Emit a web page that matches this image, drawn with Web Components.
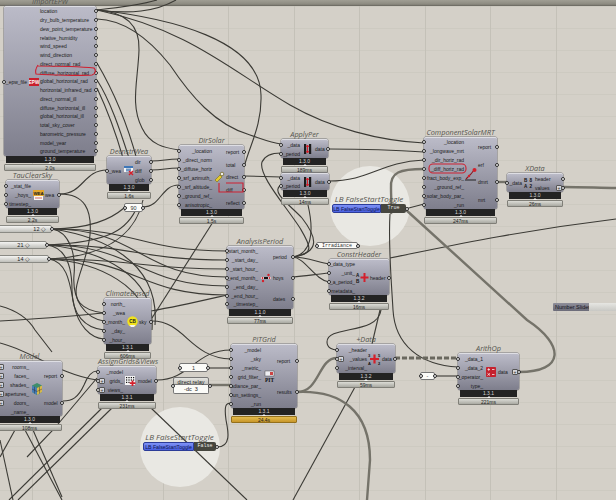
<!DOCTYPE html>
<html>
<head>
<meta charset="utf-8">
<style>
html, body { margin: 0; padding: 0; background: #d4d0c8; }
</style>
</head>
<body>
<gh-canvas>
  <gh-halo cx="370" cy="206" r="40"></gh-halo>
  <gh-halo cx="180" cy="447" r="40"></gh-halo>
  <gh-wires></gh-wires>

  <gh-node x="4" y="6" w="92" h="150" l="23" ic="13" name="ImportEPW" in="_epw_file" version="1.3.0" time="2.0s"
    out="location|dry_bulb_temperature|dew_point_temperature|relative_humidity|wind_speed|wind_direction|direct_normal_rad|diffuse_horizontal_rad|global_horizontal_rad|horizontal_infrared_rad|direct_normal_ill|diffuse_horizontal_ill|global_horizontal_ill|total_sky_cover|barometric_pressure|model_year|ground_temperature">
    <gh-icon kind="epw"></gh-icon>
  </gh-node>
  <gh-node x="107" y="156" w="44" h="28" l="14" name="DecnstrWea" in="_wea" out="dir|diff|glob" version="1.3.0" time="1.6s"><gh-icon kind="dec"></gh-icon></gh-node>
  <gh-node x="6" y="180" w="53" h="28" l="25" name="TauClearSky" in="_stat_file|_hoys_|timestep_" out="wea" version="1.3.0" time="2.2s"><gh-icon kind="wea"></gh-icon></gh-node>
  <gh-node x="179" y="145" w="65" h="64" l="33" name="DirSolar" in="_location|_direct_norm|_diffuse_horiz|_srf_azimuth_|_srf_altitude_|_ground_ref_|anisotropic_" out="report|total|direct|diff|reflect" version="1.3.0" time="1.5s"><gh-icon kind="sol"></gh-icon></gh-node>
  <gh-node x="281" y="139" w="47" h="19" l="19" ic="15" name="ApplyPer" in="_data|_period" out="data" version="1.3.0" time="189ms"><gh-icon kind="per"></gh-icon></gh-node>
  <gh-node x="281" y="173" w="48" h="17" l="19" ic="15" in="_data|_period" out="data" version="1.3.0" time="14ms"><gh-icon kind="per"></gh-icon></gh-node>
  <gh-node x="424" y="137" w="73" h="72" l="40" name="ComponentSolarMRT" in="_location|_longwave_mrt|_dir_horiz_rad|_diff_horiz_rad|fract_body_exp_|_ground_ref_|_solar_body_par_|_run" out="report|erf|dmrt|mrt" version="1.3.0" time="247ms"><gh-icon kind="mrt"></gh-icon></gh-node>
  <gh-node x="507" y="173" w="56" h="19" l="15" ic="13" name="XData" in="_data" out="header|values#" version="1.3.0" time="26ms"><gh-icon kind="xd"></gh-icon></gh-node>
  <gh-node x="227" y="246" w="66" h="63" l="31" ic="15" name="AnalysisPeriod" in="_start_month_|_start_day_|_start_hour_|_end_month_|_end_day_|_end_hour_|_timestep_" out="period|hoys|dates" version="1.1.0" time="77ms"><gh-icon kind="ap"></gh-icon></gh-node>
  <gh-node x="329" y="259" w="60" h="36" l="26" ic="15" name="ConstrHeader" in="_data_type|_unit_|_a_period_|metadata_" out="header" version="1.3.2" time="16ms"><gh-icon kind="ch"></gh-icon></gh-node>
  <gh-node x="104" y="298" w="47" h="46" l="21" name="ClimateBased" in="north_|_wea|_month_|_day_|_hour_" out="sky" version="1.3.1" time="606ms"><gh-icon kind="cb"></gh-icon></gh-node>
  <gh-node x="-3" y="361" w="65" h="55" l="32" ic="15" name="Model" in="rooms_#|faces_#|shades_#|apertures_#|doors_#|_name_" out="report|model" version="1.3.0" time="108ms"><gh-icon kind="mod"></gh-icon></gh-node>
  <gh-node x="98" y="366" w="58" h="28" l="25" ic="15" name="AssignGrids&amp;Views" in="_model|grids_#|views_#" out="model" version="1.3.1" time="231ms"><gh-icon kind="grid"></gh-icon></gh-node>
  <gh-node x="231" y="344" w="66" h="64" l="30" ic="16" name="PITGrid" in="_model|_sky|_metric_|grid_filter_|radiance_par_|run_settings_|_run" out="report|results" version="1.3.1" time="24.4s" warm><gh-icon kind="pit"></gh-icon></gh-node>
  <gh-node x="337" y="344" w="58" h="29" l="30" ic="15" name="+Data" in="_header|_values#|_interval_" out="data" version="1.3.2" time="59ms"><gh-icon kind="plus"></gh-icon></gh-node>
  <gh-node x="458" y="353" w="61" h="37" l="25" ic="15" name="ArithOp" in="_data_1|_data_2|_operator_|type_" out="data#" version="1.3.1" time="221ms"><gh-icon kind="op"></gh-icon></gh-node>

  <gh-slider x="-4" y="225" w="56" pad="5">12 ◇</gh-slider>
  <gh-slider x="-4" y="241" w="51" pad="16">21 ◇</gh-slider>
  <gh-slider x="-4" y="255" w="53" pad="18">14 ◇</gh-slider>

  <gh-panel x="124" y="203" w="19" h="9">90</gh-panel>
  <gh-panel x="179" y="363" w="29" h="9">1</gh-panel>
  <gh-panel x="420" y="372" w="15" h="8">-</gh-panel>
  <gh-panel x="316" y="242" w="42" h="7" mono>Irradiance</gh-panel>
  <gh-relay x="173" y="377" w="36" label="direct relay" value="-dc  3"></gh-relay>

  <gh-toggle x="332" y="194" blue="49" dark="25" value="True"></gh-toggle>
  <gh-toggle x="143" y="432" blue="51" dark="22" value="False"></gh-toggle>
  <gh-numslider x="553" y="303">Number Slider</gh-numslider>
  <gh-notes></gh-notes>
</gh-canvas>

<script>
const SANS = '"Liberation Sans", sans-serif';

function place(el) {
  el.style.left = el.getAttribute("x") + "px";
  el.style.top = el.getAttribute("y") + "px";
}

const canvasTpl = document.createElement("template");
canvasTpl.innerHTML = `
<style>
:host { display: block; position: relative; width: 616px; height: 500px; overflow: hidden;
  background-color: #d4d0c8;
  background-image:
    repeating-linear-gradient(90deg, transparent 0 32px, #c4c1b8 32px 33px, transparent 33px 65.5px),
    repeating-linear-gradient(180deg, transparent 0 6px, #cdcac1 6px 7px, transparent 7px 22px); }
.top { height: 6px; background: linear-gradient(#a09e94, #8c8a80 70%, #65635c); }
</style>
<div class="top"></div>
<slot></slot>`;
class GhCanvas extends HTMLElement {
  constructor() {
    super();
    this.attachShadow({ mode: "open" });
    this.shadowRoot.appendChild(canvasTpl.content.cloneNode(true));
  }
}

class GhHalo extends HTMLElement {
  constructor() {
    super();
    this.attachShadow({ mode: "open" });
    this.shadowRoot.innerHTML = `<style>:host { display: block; position: absolute; border-radius: 50%; background: #e9e8e3; }</style>`;
  }
  connectedCallback() {
    const r = +this.getAttribute("r");
    this.style.left = this.getAttribute("cx") - r + "px";
    this.style.top = this.getAttribute("cy") - r + "px";
    this.style.width = this.style.height = 2 * r + "px";
  }
}

// auto bezier, same tangents as a grasshopper wire
const a = (x1, y1, x2, y2) => {
  const d = Math.max(Math.abs(x2 - x1) / 2, 8);
  return `M${x1} ${y1}C${x1 + d} ${y1} ${x2 - d} ${y2} ${x2} ${y2}`;
};
const THIN = [
  "M97 10C125 12 140 25 139 50C138 80 130 105 142 128C150 145 165 148 179 150",
  "M97 10C170 18 260 40 261 95C262 125 250 145 245 164",
  "M97 10C190 30 230 70 290 105C330 128 380 141 424 143",
  "M97 19C125 20 150 40 170 65C190 95 215 125 250 135C262 139 272 143 281 144",
  "M97 10C130 14 155 12 176 0",
  "M97 10C115 8 140 5 157 0",
  "M97 63C110 85 125 115 137 160",
  "M97 80C110 100 120 130 129 158",
  "M97 88C105 105 115 130 123 158",
  a(151, 161, 179, 159),
  a(151, 170, 179, 168),
  a(60, 194, 107, 170),
  a(143, 207, 179, 185),
  "M52 229C90 228 110 220 124 208",
  "M47 245C110 242 128 230 138 205",
  "M49 259C90 257 133 245 143 200",
  "M60 194C85 194 92 210 90 235C87 265 68 290 80 303C86 310 95 312 104 313",
  a(52, 229, 227, 251),
  a(47, 245, 227, 260),
  a(49, 259, 227, 269),
  a(52, 229, 227, 277),
  a(47, 245, 227, 286),
  a(49, 259, 227, 295),
  "M52 229C70 232 76 255 74 275C72 300 85 318 104 321",
  "M47 245C70 248 72 275 72 290C72 315 85 328 104 330",
  "M49 259C68 262 70 285 74 305C78 325 90 338 104 339",
  "M52 229C100 236 160 260 155 325",
  "M47 245C100 250 156 275 152 330",
  "M49 259C95 262 152 285 148 335",
  "M0 321C40 319 70 316 104 313",
  "M151 311C180 306 205 300 227 295",
  "M213 222L152 318",
  "M152 321C185 321 190 358 231 359",
  "M0 306C15 310 28 318 35 330L52 352",
  "M0 343C30 350 60 375 97 380",
  "M63 401C72 401 78 398 84 385C88 375 92 371 97 371",
  "M9 500L102 408",
  "M18 500L112 408",
  "M27 457L53 430L97 378",
  "M25 430L62 500",
  "M33 430L62 497",
  "M15 430L0 457",
  "M0 440L13 500",
  "M151 408L247 500",
  "M157 380C190 380 195 350 231 350",
  "M208 368L231 368",
  "M217 447C232 447 228 430 226 420C224 405 226 403 231 403",
  "M244 176L281 177",
  "M293 257C316 254 310 245 300 228C285 205 258 175 262 162C265 155 272 153 281 153",
  "M293 257C322 252 316 236 302 218C290 205 270 192 281 185",
  "M293 257C310 254 315 235 308 205",
  "M293 257C305 257 318 262 329 264",
  "M293 257C305 258 315 280 329 282",
  "M293 277C305 276 318 274 329 273",
  "M329 149C365 149 395 150 424 152",
  "M329 181C370 181 380 162 424 160",
  "M390 214C388 245 392 290 393 310C395 345 420 365 458 367",
  "M381 310C378 335 327 325 327 342C327 348 333 350 337 350",
  "M380 310L372 344",
  "M355 387L293 500",
  "M390 258C440 248 510 232 616 219",
  "M405 209L424 204",
  "M435 376L458 376",
];
const THICK = [
  "M424 169C400 169 390 172 391 188C391 200 392 205 391 214",
  "M497 182L507 182",
  "M563 187C585 187 600 188 616 188",
  "M209 385L231 385",
  "M297 392C320 392 318 358 337 358",
  "M297 392C340 390 370 410 370 460L367 500",
  "M519 372C565 372 565 345 527 320L405 209",
];
class GhWires extends HTMLElement {
  constructor() {
    super();
    this.attachShadow({ mode: "open" });
    const thin = THIN.map((d) => `<path d="${d}"/>`).join("");
    const thick = THICK.map((d) => `<path d="${d}"/>`).join("");
    this.shadowRoot.innerHTML = `
<style>
:host { display: block; position: absolute; left: 0; top: 0; width: 616px; height: 500px; }
svg { display: block; }
path { fill: none; }
</style>
<svg width="616" height="500" viewBox="0 0 616 500">
  <g stroke="#3b3a35" stroke-width="1.1">${thin}</g>
  <g stroke="#75736a" stroke-width="2.4">${thick}</g>
  <path d="M395 358L458 358" stroke="#6a685f" stroke-width="3" stroke-dasharray="5 2"/>
</svg>`;
  }
}

const nodeTpl = document.createElement("template");
nodeTpl.innerHTML = `
<style>
:host { display: block; position: absolute; font: 5px ${SANS}; color: #1b1b20; }
.title { height: 10px; line-height: 10px; text-align: center; white-space: nowrap; font: italic 7.3px/10px "Open Sans", sans-serif; color: #55554f; }
.body { box-sizing: border-box; display: grid; border-radius: 2px; border-top: 1px solid #dedee4;
  background: linear-gradient(#bbbbc8, #7e7e8c); box-shadow: 0 0 0 .5px #77777c; }
.col { display: flex; flex-direction: column; justify-content: space-around; min-width: 0; }
.row { position: relative; display: flex; height: 6px; line-height: 6px; white-space: nowrap; }
.in .row { justify-content: flex-end; }
.port { position: absolute; top: 1px; box-sizing: border-box; width: 4px; height: 4px; border: .8px solid #2a2a2a; border-radius: 50%; background: #f2f2f2; }
.in .port { left: -2px; }
.out .port { right: -2px; }
.mark { position: absolute; top: 0; box-sizing: border-box; width: 6px; height: 6px; border: .5px solid #555; border-radius: 1px; background: #d5d5da; color: #333; font-size: 5px; line-height: 5px; text-align: center; }
.in .mark { left: 1px; }
.out .mark { right: 1px; }
.icon { display: flex; align-items: center; justify-content: center; }
.ver { height: 7px; margin: 0 2px; background: #232323; color: #d6d6d6; font-size: 5px; line-height: 7px; text-align: center; }
.time { position: relative; box-sizing: border-box; height: 7px; margin-top: 1px; border: .5px solid #807f78; border-radius: 1px; background: linear-gradient(#dcdcd6, #a9a9a2); font-size: 5px; line-height: 6px; text-align: center; color: #222; }
.time::before { content: ""; position: absolute; left: 50%; top: -3px; margin-left: -2px; border: 2px solid transparent; border-bottom-color: #f2f2f2; border-top: 0; }
:host([warm]) .time { background: linear-gradient(#e4bc4e, #c8962a); border-color: #94701c; }
</style>
<div class="title"></div>
<div class="body">
  <div class="col in"></div>
  <div class="icon"><slot></slot></div>
  <div class="col out"></div>
</div>
<div class="ver"></div>
<div class="time"></div>`;

class GhNode extends HTMLElement {
  constructor() {
    super();
    this.attachShadow({ mode: "open" });
    this.shadowRoot.appendChild(nodeTpl.content.cloneNode(true));
  }
  connectedCallback() {
    const r = this.shadowRoot;
    const w = +this.getAttribute("w");
    const l = +this.getAttribute("l");
    const ic = this.getAttribute("ic") || 14;
    this.style.left = this.getAttribute("x") + "px";
    this.style.top = this.getAttribute("y") - 10 + "px";
    this.style.width = w + "px";
    const body = r.querySelector(".body");
    body.style.height = this.getAttribute("h") + "px";
    body.style.gridTemplateColumns = `${l}px ${ic}px 1fr`;
    r.querySelector(".title").textContent = this.getAttribute("name") || "";
    r.querySelector(".ver").textContent = this.getAttribute("version");
    r.querySelector(".time").textContent = this.getAttribute("time");
    this.fill(r.querySelector(".in"), this.getAttribute("in"));
    this.fill(r.querySelector(".out"), this.getAttribute("out"));
  }
  fill(col, list) {
    for (const item of list.split("|")) {
      const row = document.createElement("div");
      row.className = "row";
      const port = document.createElement("span");
      port.className = "port";
      row.appendChild(port);
      const label = document.createElement("span");
      label.textContent = item.replace("#", "");
      row.appendChild(label);
      if (item.endsWith("#")) {
        const mark = document.createElement("span");
        mark.className = "mark";
        mark.textContent = "+";
        row.appendChild(mark);
      }
      col.appendChild(row);
    }
  }
}

const ICONS = {
  epw: `<svg width="10" height="8" viewBox="0 0 10 8"><rect width="10" height="8" fill="#c9202c"/><text x="5" y="6" font-size="4.6" font-weight="700" text-anchor="middle" fill="#fff">EPW</text></svg>`,
  dec: `<svg width="11" height="9" viewBox="0 0 11 9"><rect x="1" y="0" width="9" height="6" fill="#f4f4f4"/><rect x="1" y="0" width="9" height="2" fill="#3f77b8"/><rect x="3" y="2.5" width="5" height="3" fill="#6c95c2"/><path d="M6 5L10 9M10 5L6 9" stroke="#d4202c" stroke-width="1.4"/></svg>`,
  wea: `<svg width="11" height="11" viewBox="0 0 11 11"><path d="M1 7H10V11H1Z" fill="#f7f7f2"/><rect x="0" y="1" width="11" height="6" fill="#e3a52c"/><text x="5.5" y="5.8" font-size="4.4" font-weight="700" text-anchor="middle" fill="#222">WEA</text><path d="M2 9H9" stroke="#c44" stroke-width=".8"/></svg>`,
  sol: `<svg width="13" height="13" viewBox="0 0 13 13"><path d="M2 9L7 4L9 6L4 11Z" fill="#e4c92e" stroke="#6b5d10" stroke-width=".5"/><circle cx="9" cy="3" r="1.8" fill="#eee" stroke="#6b5d10" stroke-width=".7"/></svg>`,
  per: `<svg width="9" height="10" viewBox="0 0 9 10"><rect x="1" y="0" width="2.2" height="10" fill="#1b1b1b"/><rect x="6" y="0" width="2.2" height="10" fill="#1b1b1b"/><path d="M4.5 1V9M3 3L4.5 1L6 3M3 7L4.5 9L6 7" fill="none" stroke="#d4202c" stroke-width="1"/></svg>`,
  mrt: `<svg width="14" height="14" viewBox="0 0 14 14"><path d="M1 13H12" stroke="#222" stroke-width="1"/><path d="M2 12L7 7L10 3" stroke="#8c1822" stroke-width="1.1" fill="none"/><circle cx="10.5" cy="3" r="2" fill="#d4202c"/><circle cx="5" cy="9" r="1.2" fill="#d4202c"/></svg>`,
  xd: `<svg width="9" height="10" viewBox="0 0 9 10" font-size="4.6" font-weight="700" fill="#111"><text x="0" y="4">B</text><text x="5.4" y="4">8</text><text x="0" y="9.5">A</text><text x="5.4" y="9.5">2</text></svg>`,
  ap: `<svg width="12" height="10" viewBox="0 0 12 10"><rect x="1" y="4" width="10" height="2" fill="#f4f4f4"/><rect x="4" y="4" width="4" height="2" fill="#111"/><circle cx="8.5" cy="2" r="1.2" fill="#d4202c"/><circle cx="3" cy="8" r="1.2" fill="#d4202c"/><circle cx="2.5" cy="5" r="1" fill="#d4202c"/><circle cx="9.5" cy="5" r="1" fill="#d4202c"/></svg>`,
  ch: `<svg width="13" height="11" viewBox="0 0 13 11" font-size="4.6" font-weight="700" fill="#111"><text x="0" y="4.5">A</text><text x="0" y="10.5">B</text><path d="M8.5 1V10M4.5 5.5H12.5" stroke="#d4202c" stroke-width="2"/></svg>`,
  cb: `<svg width="11" height="11" viewBox="0 0 11 11"><circle cx="5.5" cy="5.5" r="5.2" fill="#f1e21c"/><text x="5.5" y="7" font-size="4.6" font-weight="700" text-anchor="middle" fill="#222">CB</text><path d="M2.5 9H8.5L7 11H4Z" fill="#f4f4f4"/></svg>`,
  mod: `<svg width="12" height="12" viewBox="0 0 12 12"><path d="M6 0L11 2.5V9L6 12L1 9V2.5Z" fill="#3e8e6c"/><path d="M6 5L11 2.5V9L6 12Z" fill="#d8b84a"/><path d="M1 2.5L6 5V12L1 9Z" fill="#4a7fb5"/><path d="M1 6L6 8.5L11 6M3.5 3.7V10.5M8.5 3.7V10.5" stroke="#223" stroke-width=".4" fill="none"/></svg>`,
  grid: `<svg width="11" height="10" viewBox="0 0 11 10"><rect width="10" height="9" fill="#f4f4f4"/><g fill="#111"><rect x="1" y="1" width="1.2" height="1.2"/><rect x="3.4" y="1" width="1.2" height="1.2"/><rect x="5.8" y="1" width="1.2" height="1.2"/><rect x="8" y="1" width="1.2" height="1.2"/><rect x="1" y="3.4" width="1.2" height="1.2"/><rect x="3.4" y="3.4" width="1.2" height="1.2"/><rect x="5.8" y="3.4" width="1.2" height="1.2"/><rect x="8" y="3.4" width="1.2" height="1.2"/><rect x="1" y="5.8" width="1.2" height="1.2"/><rect x="3.4" y="5.8" width="1.2" height="1.2"/></g><path d="M7.5 4.5V10M4.8 7.2H10.5" stroke="#d4202c" stroke-width="1.8"/></svg>`,
  pit: `<svg width="13" height="11" viewBox="0 0 13 11"><rect x="2" y="0" width="9" height="5" fill="#eeeef2" stroke="#333" stroke-width=".4"/><rect x="7" y="1" width="3" height="3" fill="#c44"/><text x="6.5" y="10.5" font-size="5.4" font-weight="700" font-family="Liberation Serif, serif" text-anchor="middle" fill="#111">PIT</text></svg>`,
  plus: `<svg width="13" height="12" viewBox="0 0 13 12" font-size="4" font-weight="700" fill="#111"><text x="0" y="3.6">3</text><text x="10" y="3.6">5</text><text x="0" y="11.5">A</text><text x="10" y="11.5">2</text><path d="M6.5 1.5V10.5M2 6H11" stroke="#d4202c" stroke-width="2.2"/></svg>`,
  op: `<svg width="10" height="10" viewBox="0 0 10 10"><rect width="10" height="10" rx=".8" fill="#c5222e"/><path d="M1.5 2.5H4M2.7 1.2V3.8M6 2.5H8.5M1.5 6.3L4 8.5M4 6.3L1.5 8.5M6 7.5H8.5" stroke="#f4e9e9" stroke-width=".8"/></svg>`,
};
class GhIcon extends HTMLElement {
  constructor() {
    super();
    this.attachShadow({ mode: "open" });
  }
  connectedCallback() {
    this.shadowRoot.innerHTML = `<style>:host { display: block; line-height: 0; font-family: ${SANS}; } svg { display: block; overflow: visible; }</style>` + ICONS[this.getAttribute("kind")];
  }
}

const PORT = `.p { position: absolute; top: 50%; margin-top: -2px; box-sizing: border-box; width: 4px; height: 4px; border: .8px solid #2a2a2a; border-radius: 50%; background: #f2f2f2; } .pl { left: -2.5px; } .pr { right: -2.5px; }`;

class GhSlider extends HTMLElement {
  constructor() {
    super();
    this.attachShadow({ mode: "open" });
    this.shadowRoot.innerHTML = `
<style>
:host { display: block; position: absolute; box-sizing: border-box; height: 8px; border: .5px solid #8a8a84; border-radius: 2px;
  background: linear-gradient(#f4f4f2, #bfbfba); font: 5.5px/7px ${SANS}; color: #222; text-align: right; }
${PORT}
</style><slot></slot><span class="p pr"></span>`;
  }
  connectedCallback() {
    place(this);
    this.style.width = this.getAttribute("w") + "px";
    this.style.paddingRight = this.getAttribute("pad") + "px";
  }
}

class GhPanel extends HTMLElement {
  constructor() {
    super();
    this.attachShadow({ mode: "open" });
    this.shadowRoot.innerHTML = `
<style>
:host { display: flex; align-items: center; justify-content: center; position: absolute; box-sizing: border-box; border: .6px solid #777;
  border-radius: 2px; background: #fbfbf8; font: 5.5px ${SANS}; color: #333; }
:host([mono]) { font: 5px "Liberation Mono", monospace; }
${PORT}
</style><span class="p pl"></span><slot></slot><span class="p pr"></span>`;
  }
  connectedCallback() {
    place(this);
    this.style.width = this.getAttribute("w") + "px";
    this.style.height = this.getAttribute("h") + "px";
  }
}

class GhRelay extends HTMLElement {
  constructor() {
    super();
    this.attachShadow({ mode: "open" });
    this.shadowRoot.innerHTML = `
<style>
:host { display: block; position: absolute; font: 5.5px ${SANS}; color: #222; text-align: center; }
.head { height: 8px; line-height: 8px; border-radius: 2px 2px 0 0; background: linear-gradient(#e4e4e0, #c6c6c0); border: .5px solid #777; box-sizing: border-box; }
.val { height: 9px; line-height: 8px; background: #fbfbf8; border: .5px solid #777; border-top: 0; border-radius: 0 0 2px 2px; box-sizing: border-box; white-space: pre; }
${PORT}
</style><div class="head"></div><div class="val"></div><span class="p pl"></span><span class="p pr"></span>`;
  }
  connectedCallback() {
    place(this);
    this.style.width = this.getAttribute("w") + "px";
    this.shadowRoot.querySelector(".head").textContent = this.getAttribute("label");
    this.shadowRoot.querySelector(".val").textContent = this.getAttribute("value");
  }
}

class GhToggle extends HTMLElement {
  constructor() {
    super();
    this.attachShadow({ mode: "open" });
    this.shadowRoot.innerHTML = `
<style>
:host { display: block; position: absolute; }
.title { height: 10px; text-align: center; font: italic 8px/10px "Open Sans", sans-serif; color: #55554f; white-space: nowrap; }
.box { position: relative; display: flex; height: 9px; }
.blue { box-sizing: border-box; border: .5px solid #2c3c98; border-radius: 2px 0 0 2px; background: linear-gradient(#7f92f5, #4a60e2); font: 5.2px/8px ${SANS}; color: #0e1650; text-align: center; white-space: nowrap; overflow: hidden; }
.dark { border-radius: 0 2px 2px 0; background: #46463f; font: 5px/9px "Liberation Mono", monospace; color: #eee; text-align: center; }
${PORT}
</style><div class="title">LB FalseStartToggle</div>
<div class="box"><div class="blue">LB FalseStartToggle</div><div class="dark"></div><span class="p pr"></span></div>`;
  }
  connectedCallback() {
    place(this);
    const r = this.shadowRoot;
    r.querySelector(".blue").style.width = this.getAttribute("blue") + "px";
    const dark = r.querySelector(".dark");
    dark.style.width = this.getAttribute("dark") + "px";
    dark.textContent = this.getAttribute("value");
  }
}

class GhNumSlider extends HTMLElement {
  constructor() {
    super();
    this.attachShadow({ mode: "open" });
    this.shadowRoot.innerHTML = `
<style>
:host { display: flex; position: absolute; width: 70px; height: 8px; }
.lab { width: 36px; box-sizing: border-box; padding-left: 2px; background: linear-gradient(#8e8e9a, #6b6b78); border-radius: 1px 0 0 1px; font: 5.5px/8px ${SANS}; color: #14141c; white-space: nowrap; }
.rail { flex: 1; background: linear-gradient(#e6e6e2, #c8c8c4); }
</style><div class="lab"><slot></slot></div><div class="rail"></div>`;
  }
  connectedCallback() {
    place(this);
  }
}

class GhNotes extends HTMLElement {
  constructor() {
    super();
    this.attachShadow({ mode: "open" });
    this.shadowRoot.innerHTML = `
<style>:host { display: block; position: absolute; left: 0; top: 0; width: 616px; height: 500px; pointer-events: none; } svg { display: block; }</style>
<svg width="616" height="500" fill="none" stroke="#cf2030" stroke-width="1.1">
  <path d="M38 65C36 68 35 71 36 74C50 75 80 76 92 75C96 74 96 70 94 68C75 66 50 66 38 66"/>
  <path d="M226 183H243V192H219V183"/>
  <rect x="429" y="164" width="37" height="9" rx="4"/>
</svg>`;
  }
}

customElements.define("gh-canvas", GhCanvas);
customElements.define("gh-halo", GhHalo);
customElements.define("gh-wires", GhWires);
customElements.define("gh-node", GhNode);
customElements.define("gh-icon", GhIcon);
customElements.define("gh-slider", GhSlider);
customElements.define("gh-panel", GhPanel);
customElements.define("gh-relay", GhRelay);
customElements.define("gh-toggle", GhToggle);
customElements.define("gh-numslider", GhNumSlider);
customElements.define("gh-notes", GhNotes);
</script>
</body>
</html>
